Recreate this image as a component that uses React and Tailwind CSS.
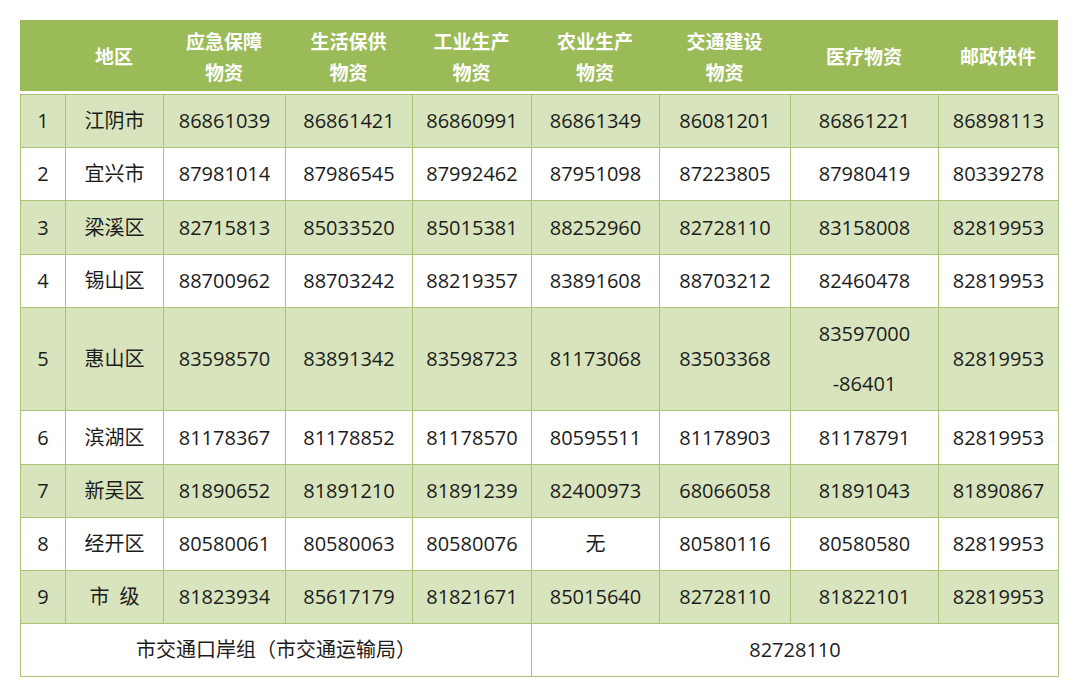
const headers = [
  ["", ""],
  ["地区"],
  ["应急保障", "物资"],
  ["生活保供", "物资"],
  ["工业生产", "物资"],
  ["农业生产", "物资"],
  ["交通建设", "物资"],
  ["医疗物资"],
  ["邮政快件"],
];

const rows = [
  ["1", "江阴市", "86861039", "86861421", "86860991", "86861349", "86081201", "86861221", "86898113"],
  ["2", "宜兴市", "87981014", "87986545", "87992462", "87951098", "87223805", "87980419", "80339278"],
  ["3", "梁溪区", "82715813", "85033520", "85015381", "88252960", "82728110", "83158008", "82819953"],
  ["4", "锡山区", "88700962", "88703242", "88219357", "83891608", "88703212", "82460478", "82819953"],
  ["5", "惠山区", "83598570", "83891342", "83598723", "81173068", "83503368", ["83597000", "-86401"], "82819953"],
  ["6", "滨湖区", "81178367", "81178852", "81178570", "80595511", "81178903", "81178791", "82819953"],
  ["7", "新吴区", "81890652", "81891210", "81891239", "82400973", "68066058", "81891043", "81890867"],
  ["8", "经开区", "80580061", "80580063", "80580076", "无", "80580116", "80580580", "82819953"],
  ["9", "市\u2002级", "81823934", "85617179", "81821671", "85015640", "82728110", "81822101", "82819953"],
];

const cols = "grid-cols-[45px_98px_122px_127px_119px_128px_131px_148px_120px]";

function Cell({ value, shaded }) {
  return (
    <div
      className={`flex flex-col items-center justify-center border-r border-b border-[#a8c474] text-[20px] text-[#1c1c1c] whitespace-pre ${
        shaded ? "bg-[#d8e4bd]" : "bg-white"
      }`}
    >
      {Array.isArray(value) ? (
        <div className="flex flex-col items-center gap-[24px] leading-[26px]">
          {value.map((v) => (
            <span key={v}>{v}</span>
          ))}
        </div>
      ) : (
        value
      )}
    </div>
  );
}

export default function App() {
  return (
    <div
      className="w-[1080px] h-[699px] bg-white pt-[20px] pl-[20px]"
      style={{ fontFamily: '"Open Sans", "Noto Sans CJK SC", sans-serif' }}
    >
      <div className="w-[1038px]">
        <div className={`grid ${cols} h-[71px] bg-[#9bbb59]`}>
          {headers.map((h, i) => (
            <div
              key={i}
              className="flex flex-col items-center justify-center text-white font-bold text-[19px] leading-[31px]"
              style={{ fontFamily: '"Noto Sans CJK SC", sans-serif' }}
            >
              {h.map((line, j) => (
                <span key={j}>{line}</span>
              ))}
            </div>
          ))}
        </div>
        <div className="h-[3px]" />
        <div
          className={`grid ${cols} grid-rows-[53px_53px_54px_53px_103px_54px_53px_53px_53px_53px] border-l border-t border-[#a8c474]`}
        >
          {rows.map((row, r) =>
            row.map((v, c) => (
              <Cell key={`${r}-${c}`} value={v} shaded={r % 2 === 0} />
            ))
          )}
          <div className="col-span-5 flex items-center justify-center border-r border-b border-[#a8c474] text-[20px] text-[#1c1c1c]">
            市交通口岸组（市交通运输局）
          </div>
          <div className="col-span-4 flex items-center justify-center border-r border-b border-[#a8c474] text-[20px] text-[#1c1c1c]">
            82728110
          </div>
        </div>
      </div>
    </div>
  );
}
